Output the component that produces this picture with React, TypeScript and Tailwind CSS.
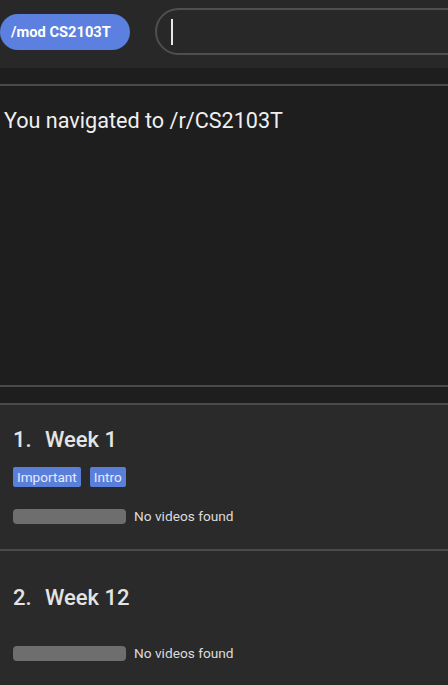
import React from "react";

function Week({ n, title, tags, pt, barMt }: { n: number; title: string; tags: string[]; pt: string; barMt: string }) {
  return (
    <div className={`bg-[#2a2a2a] pl-[13px] ${pt}`}>
      <div className="flex text-[22px] leading-[33px] font-medium text-[#e4e4e4]">
        <span className="w-[32px]">{n}.</span>
        <span>{title}</span>
      </div>
      {tags.length > 0 && (
        <div className="mt-[11px] flex gap-[9px]">
          {tags.map((t) => (
            <span key={t} className="h-[20px] px-[4px] rounded-[2px] bg-[#5a7fdb] text-[13.6px] leading-[20px] text-[#e6ebff]">
              {t}
            </span>
          ))}
        </div>
      )}
      <div className={`flex items-center gap-[8px] ${barMt}`}>
        <div className="w-[113px] h-[15px] rounded-[4px] bg-[#6e6e6e]" />
        <span className="text-[13.7px] leading-[15px] text-[#dcdcdc]">No videos found</span>
      </div>
    </div>
  );
}

export default function App() {
  return (
    <div className="w-[448px] h-[685px] overflow-hidden bg-[#1e1e1e] flex flex-col" style={{ fontFamily: "Roboto, 'Noto Sans', sans-serif" }}>
      <div className="h-[68px] shrink-0 bg-[#282828] flex items-start">
        <div className="mt-[14px] h-[36px] w-[130px] shrink-0 rounded-full bg-[#5b80e0] pl-[11px] flex items-center text-[14.7px] font-bold text-white">
          /mod CS2103T
        </div>
        <div className="mt-[8px] ml-[25px] h-[47px] w-[320px] shrink-0 rounded-full border-2 border-[#4f4f4f] bg-[#282828] flex items-center pl-[14px]">
          <div className="w-[1.5px] h-[26px] bg-[#e8e8e8]" />
        </div>
      </div>
      <div className="h-[16px] shrink-0 bg-[#1e1e1e]" />
      <div className="h-[2px] shrink-0 bg-[#4a4a4a]" />
      <div className="h-[299px] shrink-0 bg-[#1e1e1e] pt-[18px] pl-[4px] text-[21.6px] leading-[33px] text-[#f0f0f0]">
        You navigated to /r/CS2103T
      </div>
      <div className="h-[2px] shrink-0 bg-[#4a4a4a]" />
      <div className="h-[16px] shrink-0 bg-[#1e1e1e]" />
      <div className="h-[2px] shrink-0 bg-[#4a4a4a]" />
      <div className="h-[144px] shrink-0 flex flex-col">
        <Week n={1} title="Week 1" tags={["Important", "Intro"]} pt="pt-[18px] h-full" barMt="mt-[22px]" />
      </div>
      <div className="h-[2px] shrink-0 bg-[#4a4a4a]" />
      <div className="flex-1 flex flex-col">
        <Week n={2} title="Week 12" tags={[]} pt="pt-[30px] h-full" barMt="mt-[32px]" />
      </div>
    </div>
  );
}
